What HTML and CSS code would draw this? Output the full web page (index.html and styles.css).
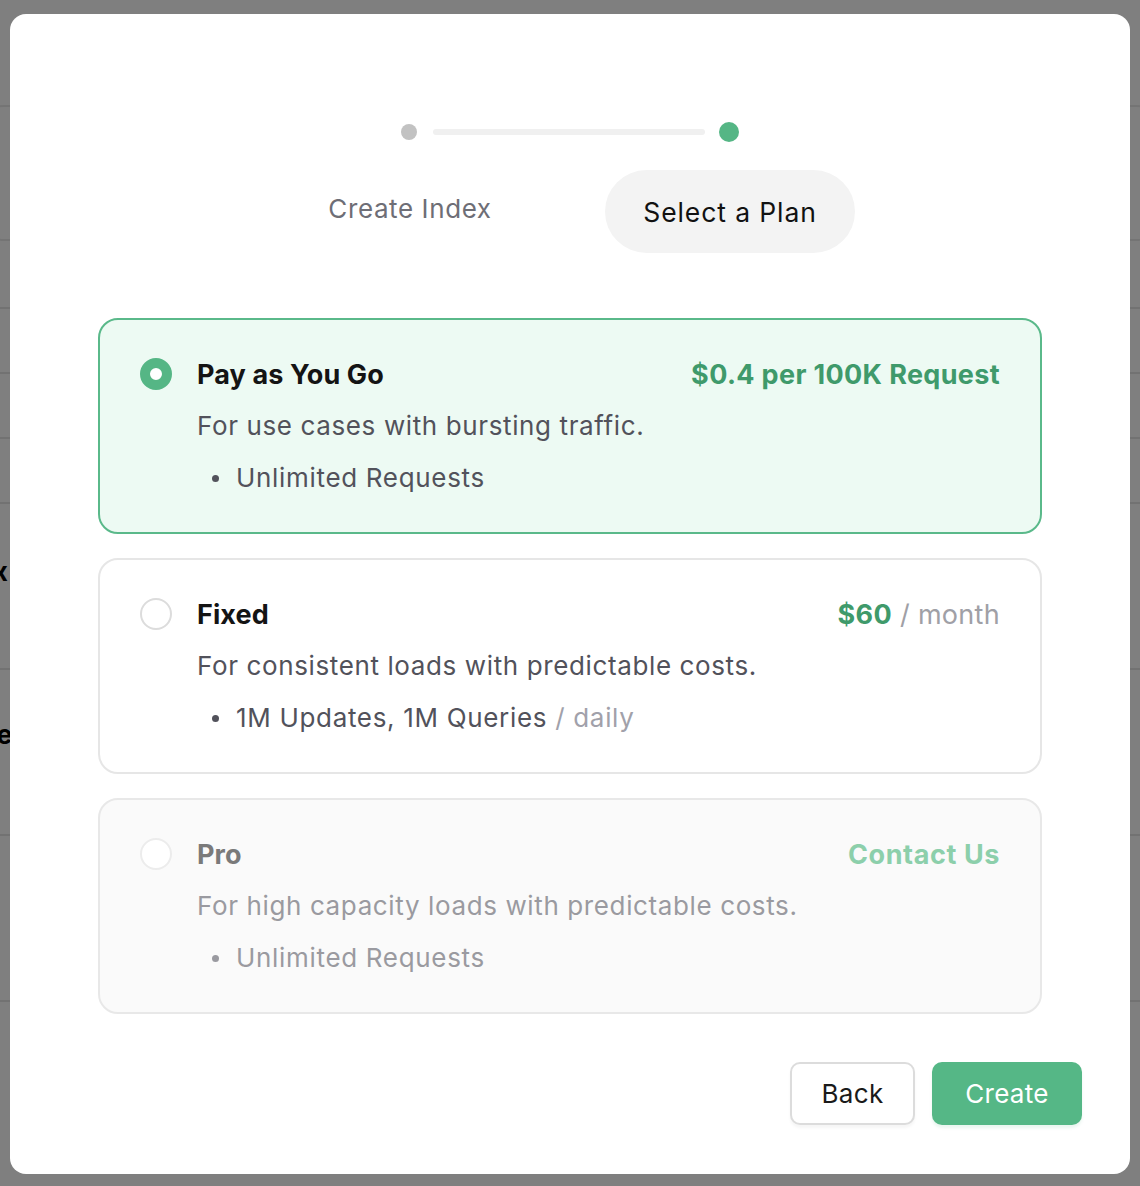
FILE: index.html
```html
<!DOCTYPE html>
<html lang="en">
<head>
<meta charset="utf-8">
<title>Select a Plan</title>
<link rel="stylesheet" href="styles.css">
</head>
<body>
<div class="bg-page">
  <div class="bg-box"></div>
  <div class="bg-rows">
    <div class="bg-row line"></div>
    <div class="bg-row"></div>
    <div class="bg-row"></div>
    <div class="bg-row"></div>
    <div class="bg-row tall first"><span class="bg-text strong">Index</span></div>
    <div class="bg-row tall"><span class="bg-text strong">Name</span><span class="bg-text">99</span></div>
    <div class="bg-row tall"></div>
    <div class="bg-row last"><span class="bg-text">0</span></div>
  </div>
</div>

<div class="overlay">
  <div class="modal">
    <div class="stepper">
      <span class="step-dot done"></span>
      <span class="step-line"></span>
      <span class="step-dot active"></span>
    </div>
    <div class="step-labels">
      <div class="step-label">Create Index</div>
      <div class="step-label current">Select a Plan</div>
    </div>

    <div class="plans">
      <div class="plan selected">
        <span class="radio checked"></span>
        <div class="plan-body">
          <div class="plan-head">
            <span class="plan-name">Pay as You Go</span>
            <span class="plan-price">$0.4 per 100K Request</span>
          </div>
          <div class="plan-desc">For use cases with bursting traffic.</div>
          <ul class="plan-features">
            <li>Unlimited Requests</li>
          </ul>
        </div>
      </div>

      <div class="plan">
        <span class="radio"></span>
        <div class="plan-body">
          <div class="plan-head">
            <span class="plan-name">Fixed</span>
            <span class="plan-price">$60<span class="unit"> / month</span></span>
          </div>
          <div class="plan-desc">For consistent loads with predictable costs.</div>
          <ul class="plan-features">
            <li>1M Updates, 1M Queries<span class="unit"> / daily</span></li>
          </ul>
        </div>
      </div>

      <div class="plan disabled">
        <span class="radio"></span>
        <div class="plan-body">
          <div class="plan-head">
            <span class="plan-name">Pro</span>
            <span class="plan-price">Contact Us</span>
          </div>
          <div class="plan-desc">For high capacity loads with predictable costs.</div>
          <ul class="plan-features">
            <li>Unlimited Requests</li>
          </ul>
        </div>
      </div>
    </div>

    <div class="actions">
      <button class="btn btn-secondary" type="button">Back</button>
      <button class="btn btn-primary" type="button">Create</button>
    </div>
  </div>
</div>
</body>
</html>
```

FILE: styles.css
```css
* {
  box-sizing: border-box;
}

html, body {
  margin: 0;
  padding: 0;
}

body {
  font-family: Inter, "Noto Sans", "Liberation Sans", sans-serif;
  background: #ffffff;
  color: #111111;
  width: 1140px;
  height: 1186px;
  overflow: hidden;
}

/* ---------- faint page behind the dialog ---------- */
.bg-page {
  padding: 105px 0 0 0;
}

.bg-box {
  height: 136px;
  margin: 0 -20px 0 -20px;
  border: 2px solid #e8e8e8;
  border-radius: 24px;
}

.bg-rows {
  margin-top: 66px;
}

.bg-row {
  height: 65px;
  border-bottom: 2px solid #e4e4e4;
  display: flex;
  flex-direction: column;
  justify-content: center;
  margin-left: -62px;
}

.bg-row.line {
  height: 2px;
}

.bg-row.tall {
  height: 166px;
}

.bg-row.first {
  padding-bottom: 28px;
}

.bg-row.last {
  height: 200px;
  border-bottom: none;
}

.bg-text {
  font-size: 26px;
  color: #555;
  line-height: 34px;
}

.bg-text.strong {
  color: #000;
  font-weight: 700;
}

/* ---------- overlay + modal ---------- */
.overlay {
  position: fixed;
  inset: 0;
  background: rgba(0, 0, 0, 0.5);
  padding: 14px 10px 12px 10px;
}

.modal {
  height: 100%;
  background: #ffffff;
  border-radius: 16px;
  padding: 108px 48px 0 48px;
  display: flex;
  flex-direction: column;
}

/* stepper */
.stepper {
  display: flex;
  align-items: center;
  justify-content: center;
  height: 20px;
}

.step-dot {
  display: block;
  border-radius: 50%;
}

.step-dot.done {
  width: 16px;
  height: 16px;
  background: #c2c2c2;
}

.step-dot.active {
  width: 20px;
  height: 20px;
  background: #55b685;
}

.step-line {
  display: block;
  width: 272px;
  height: 6px;
  border-radius: 3px;
  background: #f0f0f0;
  margin: 0 14px 0 16px;
}

.step-labels {
  display: flex;
  justify-content: center;
  gap: 70px;
  margin-top: 28px;
}

.step-label {
  width: 250px;
  height: 83px;
  display: flex;
  align-items: center;
  justify-content: center;
  font-size: 26px;
  letter-spacing: 0.6px;
  color: #6e6e76;
  border-radius: 42px;
  padding-bottom: 6px;
}

.step-label.current {
  background: #f3f3f3;
  color: #111111;
  font-size: 26.5px;
  letter-spacing: 0.9px;
  padding-bottom: 0;
}

/* plans */
.plans {
  margin: 65px 40px 0 40px;
  display: flex;
  flex-direction: column;
  gap: 24px;
}

.plan {
  display: flex;
  gap: 25px;
  border: 2px solid #e6e6e6;
  border-radius: 20px;
  padding: 28px 40px;
  background: #ffffff;
}

.plan.selected {
  background: #edfaf3;
  border-color: #5ab98a;
}

.plan.disabled {
  background: #fafafa;
  border-color: #e8e8e8;
}

.radio {
  flex: none;
  width: 32px;
  height: 32px;
  margin-top: 10px;
  border-radius: 50%;
  border: 2px solid #dcdcdc;
  background: #ffffff;
}

.radio.checked {
  border: 10px solid #55b685;
}

.plan.disabled .radio {
  border-color: #ececec;
}

.plan-body {
  flex: 1;
  min-width: 0;
}

.plan-head {
  display: flex;
  justify-content: space-between;
  align-items: center;
  height: 52px;
}

.plan-name {
  font-size: 27px;
  font-weight: 700;
  color: #141414;
  letter-spacing: 0.1px;
}

.plan-price {
  font-size: 27px;
  font-weight: 700;
  color: #3f9a6b;
  letter-spacing: 0.35px;
}

.plan-price .unit {
  font-weight: 400;
  color: #a0a0a6;
  letter-spacing: 0.3px;
}

.plan-desc {
  font-size: 26px;
  line-height: 52px;
  letter-spacing: 0.62px;
  color: #52525b;
}

.plan-features {
  list-style: none;
  margin: 0;
  padding: 0;
}

.plan-features li {
  display: flex;
  align-items: center;
  font-size: 26px;
  line-height: 52px;
  letter-spacing: 0.68px;
  color: #52525b;
}

.plan-features li::before {
  content: "";
  flex: none;
  width: 7px;
  height: 7px;
  border-radius: 50%;
  background: #52525b;
  margin: 0 17px 0 15px;
}

.plan-features .unit {
  color: #a1a1aa;
  white-space: pre;
}

.plan.disabled .plan-name {
  color: #7a7a7a;
}

.plan.disabled .plan-price {
  color: #8ccfab;
  letter-spacing: 0.6px;
}

.plan.disabled .plan-desc,
.plan.disabled .plan-features li {
  color: #9a9aa0;
}

.plan.disabled .plan-features li::before {
  background: #9a9aa0;
}

/* actions */
.actions {
  margin-top: 48px;
  display: flex;
  justify-content: flex-end;
  gap: 17px;
}

.btn {
  font-family: inherit;
  font-size: 26px;
  height: 63px;
  border-radius: 10px;
  cursor: pointer;
  letter-spacing: 0.3px;
}

.btn-secondary {
  width: 125px;
  background: #ffffff;
  color: #1a1a1a;
  border: 2px solid #dcdcdc;
  box-shadow: 0 3px 3px rgba(0, 0, 0, 0.04);
}

.btn-primary {
  width: 150px;
  background: #55b786;
  color: #ffffff;
  border: none;
  box-shadow: 0 3px 3px rgba(85, 183, 134, 0.12);
}
```
